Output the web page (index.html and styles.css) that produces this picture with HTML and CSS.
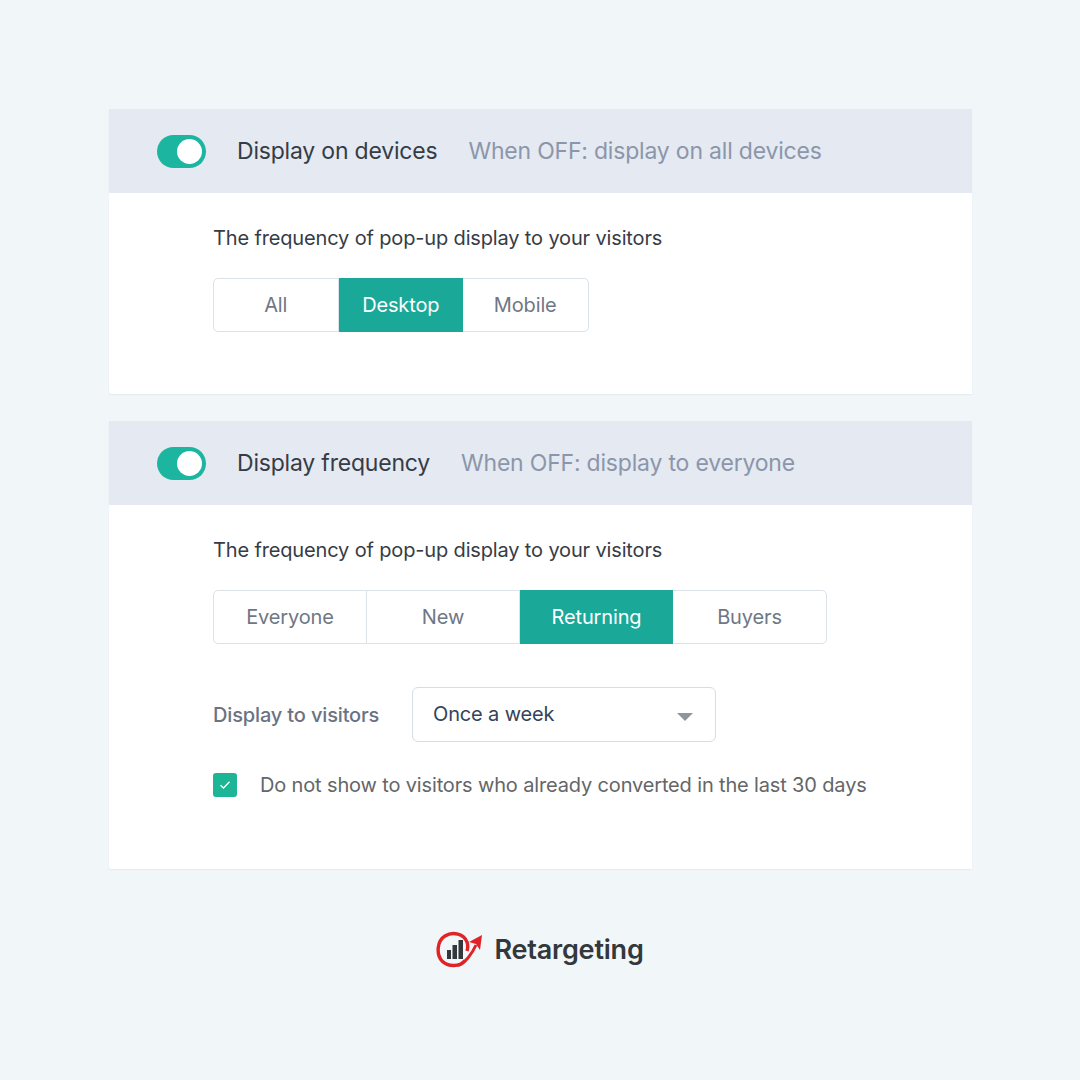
FILE: index.html
```html
<!DOCTYPE html>
<html lang="en">
<head>
    <meta charset="UTF-8">
    <title>Retargeting display settings</title>
    <link rel="stylesheet" href="styles.css">
</head>
<body>
    <section class="card card-devices">
        <div class="card-header">
            <span class="toggle"><span class="toggle-knob"></span></span>
            <span class="card-title">Display on devices</span>
            <span class="card-hint">When OFF: display on all devices</span>
        </div>
        <div class="card-body">
            <p class="field-label">The frequency of pop-up display to your visitors</p>
            <div class="segments segments-3">
                <span class="segment">All</span>
                <span class="segment active">Desktop</span>
                <span class="segment">Mobile</span>
            </div>
        </div>
    </section>

    <section class="card card-frequency">
        <div class="card-header">
            <span class="toggle"><span class="toggle-knob"></span></span>
            <span class="card-title">Display frequency</span>
            <span class="card-hint">When OFF: display to everyone</span>
        </div>
        <div class="card-body">
            <p class="field-label">The frequency of pop-up display to your visitors</p>
            <div class="segments segments-4">
                <span class="segment">Everyone</span>
                <span class="segment">New</span>
                <span class="segment active">Returning</span>
                <span class="segment">Buyers</span>
            </div>
            <div class="select-row">
                <span class="select-label">Display to visitors</span>
                <div class="select">
                    <span>Once a week</span>
                    <span class="select-arrow"></span>
                </div>
            </div>
            <div class="check-row">
                <span class="checkbox">
                    <svg width="12" height="10" viewBox="0 0 12 10"><path d="M1.5 5.2 4.5 8 10.5 1.8" fill="none" stroke="#fff" stroke-width="1.3"/></svg>
                </span>
                <span class="check-label">Do not show to visitors who already converted in the last 30 days</span>
            </div>
        </div>
    </section>

    <footer class="brand">
        <svg class="brand-logo" width="48" height="38" viewBox="0 0 48 38">
            <rect x="11" y="20" width="4" height="9" fill="#33383d"/>
            <rect x="16.500" y="15" width="4.500" height="14" fill="#33383d"/>
            <rect x="22.500" y="10" width="4.500" height="19" fill="#33383d"/>
            <path d="M29 30.500C24 37 12 37 6 31 0 24 1 11 9 6 17 1 28 4 31 12 32 15 32 18 31 21" fill="none" stroke="#e02327" stroke-width="3.400"/>
            <path d="M22 35.500C29 33 36 24 40 15" fill="none" stroke="#e02327" stroke-width="3"/>
            <path d="M33 12 46 5 44 20 40 14Z" fill="#e02327"/>
        </svg>
        <span class="brand-name">Retargeting</span>
    </footer>
</body>
</html>
```

FILE: styles.css
```css
html, body {
    height: 100%;
}
body {
    margin: 0;
    padding: 109px 108px 0 109px;
    box-sizing: border-box;
    background: #f1f6f9;
    font-family: Inter, "Liberation Sans", sans-serif;
    color: #363c46;
}
.card {
    background: #fff;
    border-radius: 3px 0 0 3px;
    box-shadow: 0 1px 2px rgba(60, 80, 110, 0.07);
}
.card-devices {
    height: 285px;
    margin-bottom: 27px;
}
.card-frequency {
    height: 448px;
}
.card-header {
    height: 84px;
    display: flex;
    align-items: center;
    padding-left: 48px;
    background: #e4e9f2;
    font-size: 23px;
    letter-spacing: -0.2px;
}
.toggle {
    width: 49px;
    height: 33px;
    border-radius: 17px;
    background: #1cb5a0;
    display: flex;
    align-items: center;
    justify-content: flex-end;
    padding-right: 4px;
    box-sizing: border-box;
    margin-right: 31px;
}
.toggle-knob {
    width: 25px;
    height: 25px;
    border-radius: 50%;
    background: #fff;
}
.card-title {
    margin-right: 31px;
}
.card-hint {
    color: #8c96aa;
}
.card-body {
    padding: 33px 0 0 104px;
}
.field-label {
    margin: 0 0 28px;
    font-size: 20px;
    line-height: 24px;
    letter-spacing: -0.15px;
}
.segments {
    display: inline-flex;
    border: 1px solid #dbe2e8;
    border-radius: 5px;
    height: 54px;
    box-sizing: border-box;
    font-size: 20px;
    letter-spacing: -0.15px;
    color: #6f7785;
}
.segment {
    display: flex;
    align-items: center;
    justify-content: center;
    border-right: 1px solid #dbe2e8;
    box-sizing: border-box;
}
.segment:last-child {
    border-right: 0;
}
.segment.active {
    background: #1aa899;
    color: #fff;
    border-right: 0;
    margin: -1px 0;
}
.segments-3 .segment {
    width: 124.500px;
}
.segments-4 .segment {
    width: 153px;
}
.select-row {
    display: flex;
    align-items: center;
    margin-top: 43px;
}
.select-label {
    width: 199px;
    font-size: 20px;
    font-weight: 500;
    letter-spacing: -0.15px;
    color: #6a7383;
}
.select {
    width: 304px;
    height: 55px;
    box-sizing: border-box;
    border: 1px solid #d6dde3;
    border-radius: 6px;
    display: flex;
    align-items: center;
    justify-content: space-between;
    padding: 0 22px 0 20px;
    font-size: 20px;
    letter-spacing: -0.15px;
    color: #33435a;
}
.select span:first-child {
    margin-top: -2px;
}
.select-arrow {
    width: 0;
    height: 0;
    margin-top: 4px;
    border-left: 8px solid transparent;
    border-right: 8px solid transparent;
    border-top: 8px solid #8f959c;
}
.check-row {
    display: flex;
    align-items: center;
    margin-top: 31px;
}
.checkbox {
    width: 24px;
    height: 24px;
    margin-right: 23px;
    border-radius: 3px;
    background: #1cb595;
    display: flex;
    align-items: center;
    justify-content: center;
}
.check-label {
    font-size: 20px;
    letter-spacing: -0.15px;
    color: #646668;
}
.brand {
    display: flex;
    align-items: center;
    justify-content: center;
    margin: 60px 0 0 -1px;
    height: 40px;
}
.brand-logo {
    margin-right: 10px;
}
.brand-name {
    font-size: 27px;
    font-weight: 600;
    letter-spacing: -0.2px;
    color: #33383d;
}
```
